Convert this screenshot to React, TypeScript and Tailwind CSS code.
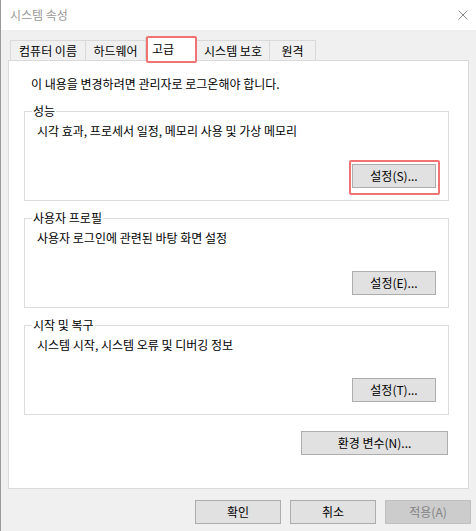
const font = "font-['Noto_Sans_CJK_KR',sans-serif]";

type BtnProps = {
  label: string;
  width?: string;
  disabled?: boolean;
  highlight?: boolean;
};

function Btn({ label, width = "w-[84px]", disabled, highlight }: BtnProps) {
  return (
    <div
      className={`relative flex h-[24px] items-center justify-center border ${width} ${
        disabled
          ? "border-[#bfbfbf] bg-[#cccccc] text-[#838383]"
          : "border-[#adadad] bg-[#e1e1e1] text-black"
      }`}
    >
      {label}
      {highlight ? (
        <span className="pointer-events-none absolute -top-[5px] -right-[5px] -bottom-[8px] -left-[4px] rounded-[2px] border-2 border-[#ef7373]" />
      ) : null}
    </div>
  );
}

type GroupProps = {
  title: string;
  text: string;
  button: string;
  highlight?: boolean;
  className?: string;
};

function Group({ title, text, button, highlight, className = "" }: GroupProps) {
  return (
    <div
      className={`relative flex h-[90px] w-[425px] flex-col justify-between border border-[#dcdcdc] pt-[11px] pr-[12px] pb-[12px] pl-[12px] ${className}`}
    >
      <span className="absolute -top-[9px] left-[7px] bg-white px-px">{title}</span>
      <p>{text}</p>
      <div className="flex justify-end">
        <Btn label={button} highlight={highlight} />
      </div>
    </div>
  );
}

const tabs = [
  { label: "컴퓨터 이름", width: "w-[75px]" },
  { label: "하드웨어", width: "w-[60px]" },
  { label: "고급", width: "w-[51px]", active: true },
  { label: "시스템 보호", width: "w-[73px]" },
  { label: "원격", width: "w-[47px]", last: true },
];

export default function App() {
  return (
    <div
      className={`flex h-[531px] w-[476px] flex-col border-l border-[#9a9a9a] bg-[#f0f0f0] text-[12px] leading-[16px] text-black ${font}`}
    >
      <div className="flex h-[30px] items-center justify-between bg-white pr-[8px] pl-[9px]">
        <span className="text-[#999999]">시스템 속성</span>
        <svg width="10" height="10" viewBox="0 0 10 10" aria-hidden="true">
          <path d="M0.5 0.5L9.5 9.5M9.5 0.5L0.5 9.5" stroke="#8c8c8c" strokeWidth="1" />
        </svg>
      </div>

      <div className="mt-[5px] flex h-[25px] items-end pl-[9px]">
        {tabs.map((tab) =>
          tab.active ? (
            <div
              key={tab.label}
              className={`relative z-10 -mb-px flex h-[24px] items-start border-x border-t border-[#d9d9d9] bg-white pt-[3px] pl-[6px] ${tab.width}`}
            >
              {tab.label}
              <span className="pointer-events-none absolute -top-[2px] -right-[2px] -bottom-[2px] left-0 rounded-[2px] border-2 border-[#ef7373]" />
            </div>
          ) : (
            <div
              key={tab.label}
              className={`flex h-[20px] items-center justify-center border-t border-l border-[#d9d9d9] bg-[#f0f0f0] ${
                tab.last ? "border-r" : ""
              } ${tab.width}`}
            >
              {tab.label}
            </div>
          )
        )}
      </div>

      <div className="mx-[7px] flex h-[429px] flex-col border border-[#d9d9d9] bg-white pt-[15px] pl-[15px]">
        <p className="pl-[7px]">이 내용을 변경하려면 관리자로 로그온해야 합니다.</p>
        <Group
          className="mt-[19px]"
          title="성능"
          text="시각 효과, 프로세서 일정, 메모리 사용 및 가상 메모리"
          button="설정(S)..."
          highlight
        />
        <Group
          className="mt-[17px]"
          title="사용자 프로필"
          text="사용자 로그인에 관련된 바탕 화면 설정"
          button="설정(E)..."
        />
        <Group
          className="mt-[17px]"
          title="시작 및 복구"
          text="시스템 시작, 시스템 오류 및 디버깅 정보"
          button="설정(T)..."
        />
        <div className="mt-[16px] flex w-[424px] justify-end">
          <Btn label="환경 변수(N)..." width="w-[147px]" />
        </div>
      </div>

      <div className="mt-[11px] flex justify-end gap-[9px] pr-[5px]">
        <Btn label="확인" width="w-[86px]" />
        <Btn label="취소" width="w-[86px]" />
        <Btn label="적용(A)" width="w-[86px]" disabled />
      </div>
    </div>
  );
}
